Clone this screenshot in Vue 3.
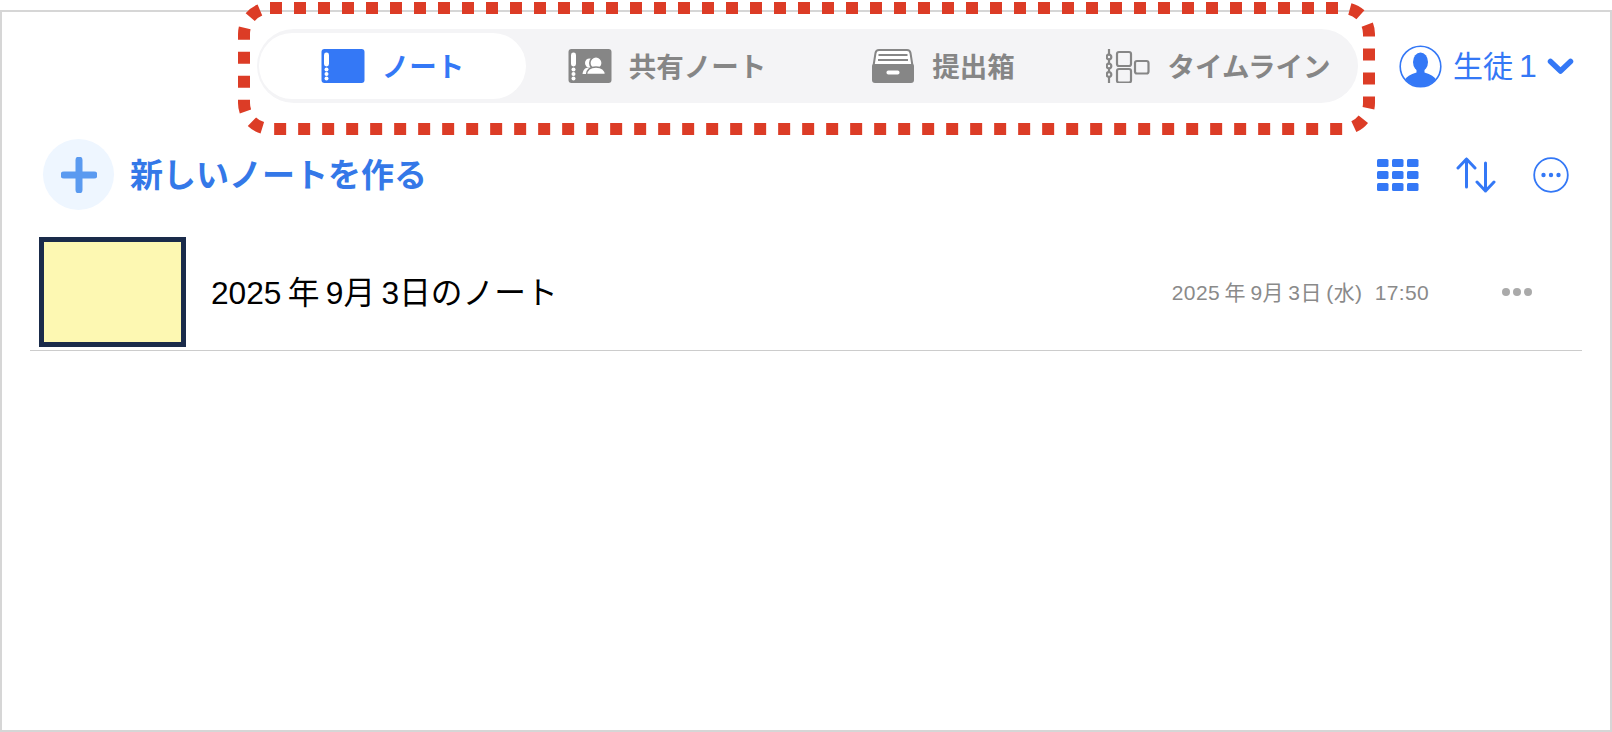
<script setup>
const tabs = [
  { label: 'ノート', icon: 'note', active: true },
  { label: '共有ノート', icon: 'shared' },
  { label: '提出箱', icon: 'box' },
  { label: 'タイムライン', icon: 'timeline' }
]
</script>

<template>
  <div class="frame">
    <header class="header">
      <nav class="tabs">
        <div v-for="tab in tabs" :key="tab.label" class="tab" :class="{ active: tab.active }">
          <svg class="tab-icon" width="44" height="34" viewBox="0 0 44 34">
            <template v-if="tab.icon === 'note' || tab.icon === 'shared'">
              <rect x="0.5" width="43" height="34" rx="3" fill="currentColor" />
              <rect x="3" y="3.500" width="5" height="14" rx="2.400" fill="#fff" />
              <circle cx="5.500" cy="20.500" r="2" fill="#fff" />
              <circle cx="5.500" cy="25" r="2" fill="#fff" />
              <circle cx="5.500" cy="29.500" r="2" fill="#fff" />
            </template>
            <template v-if="tab.icon === 'shared'">
              <circle cx="21.500" cy="14" r="4.500" fill="#fff" />
              <path d="M14.500 25c.5-4.500 3-6.500 6.500-6.500h3v6.500z" fill="#fff" />
              <circle cx="28" cy="14" r="6.200" fill="#fff" stroke="currentColor" stroke-width="1.600" />
              <path d="M18.500 25.500c.5-5.500 4-7.500 9.500-7.500s9 2 9.500 7.500z" fill="#fff" stroke="currentColor" stroke-width="1.400" />
            </template>
            <template v-if="tab.icon === 'box'">
              <path d="M2.500 17 4.500 4Q5 1 8 1h28q3 0 3.500 3l2 13" fill="#fff" stroke="currentColor" stroke-width="2" />
              <path d="M7.500 6h29M7 11h30" stroke="currentColor" stroke-width="2" />
              <path d="M1 17q0-2 2-2h38q2 0 2 2v14q0 3-3 3H4q-3 0-3-3z" fill="currentColor" />
              <rect x="15.500" y="21.500" width="13" height="4" rx="1.800" fill="#fff" />
            </template>
            <template v-if="tab.icon === 'timeline'">
              <g fill="none" stroke="currentColor" stroke-width="2.200">
                <path d="M3 0v34" />
                <circle cx="3" cy="8" r="2.300" fill="#f4f4f6" />
                <circle cx="3" cy="17" r="2.300" fill="#f4f4f6" />
                <circle cx="3" cy="25.500" r="2.300" fill="#f4f4f6" />
                <rect x="11" y="3" width="14" height="14" rx="2" />
                <rect x="11" y="20" width="14" height="13.500" rx="2" />
                <rect x="29" y="12" width="13.500" height="12.500" rx="2" />
              </g>
            </template>
          </svg>
          <span>{{ tab.label }}</span>
        </div>
      </nav>
      <div class="user">
        <svg width="43" height="43" viewBox="0 0 43 43">
          <defs>
            <clipPath id="avatar"><circle cx="21.500" cy="21.500" r="20" /></clipPath>
          </defs>
          <circle cx="21.500" cy="21.500" r="20.300" fill="none" stroke="#3478f6" stroke-width="1.600" />
          <g clip-path="url(#avatar)" fill="#3478f6">
            <ellipse cx="21.500" cy="17" rx="7.500" ry="9.500" />
            <path d="M17.500 24v3.500Q8 30 6 35v8h31v-8q-2-5-11.500-7.500V24z" />
          </g>
        </svg>
        <span class="user-name">生徒&#8201;<b>1</b></span>
        <svg width="27" height="18" viewBox="0 0 27 18">
          <path d="M3.500 4.500 13.500 14 23.500 4.500" fill="none" stroke="#3478f6" stroke-width="5.500" stroke-linecap="round" stroke-linejoin="round" />
        </svg>
      </div>
    </header>

    <div class="toolbar">
      <div class="add">
        <span class="add-circle">
          <svg width="36" height="36" viewBox="0 0 36 36">
            <path d="M18 3v30M3 18h30" stroke="#5a9af0" stroke-width="7" stroke-linecap="round" />
          </svg>
        </span>
        <span class="add-label">新しいノートを作る</span>
      </div>
      <div class="tools">
        <svg width="42" height="32" viewBox="0 0 42 32" fill="#3478f6">
          <template v-for="y in [0, 12, 24]" :key="y">
            <rect v-for="x in [0, 15, 30]" :key="x" :x="x" :y="y" width="11.500" height="8" rx="1.500" />
          </template>
        </svg>
        <svg width="40" height="36" viewBox="0 0 40 36" fill="none" stroke="#3478f6" stroke-width="3" stroke-linecap="round" stroke-linejoin="round">
          <path d="M10.500 30V2M2 11l8.500-9L19 11" />
          <path d="M29.500 6v28M21 25l8.500 9L38 25" />
        </svg>
        <svg width="36" height="36" viewBox="0 0 36 36">
          <circle cx="18" cy="18" r="16.800" fill="none" stroke="#3478f6" stroke-width="1.800" />
          <circle cx="10.500" cy="18" r="2.200" fill="#3478f6" />
          <circle cx="18" cy="18" r="2.200" fill="#3478f6" />
          <circle cx="25.500" cy="18" r="2.200" fill="#3478f6" />
        </svg>
      </div>
    </div>

    <div class="note-row">
      <div class="thumb"></div>
      <div class="note-title">2025&#8201;年&#8201;9月&#8201;3日のノート</div>
      <div class="note-date">2025&#8201;年&#8201;9月&#8201;3日&#8201;(水) &nbsp;17:50</div>
      <div class="dots"><i></i><i></i><i></i></div>
    </div>

    <svg class="callout" width="1143" height="136" viewBox="0 0 1143 136">
      <rect x="6" y="6" width="1125" height="121" rx="26" fill="none" stroke="#dc3c26" stroke-width="12" stroke-dasharray="12 12" />
    </svg>
  </div>
</template>

<style scoped>
.frame {
  position: relative;
  box-sizing: border-box;
  height: 722px;
  margin-top: 10px;
  border: 2px solid #d6d6d6;
  background: #fff;
  font-family: "Liberation Sans", "Noto Sans CJK JP", sans-serif;
}

.header {
  display: flex;
  align-items: center;
  padding: 17px 0 0 255px;
}

.tabs {
  display: grid;
  grid-template-columns: 270px 280px 272px 279px;
  width: 1101px;
  height: 74px;
  border-radius: 37px;
  background: #f4f4f6;
}

.tab {
  display: flex;
  align-items: center;
  justify-content: center;
  gap: 17px;
  color: #868686;
  font-size: 27.500px;
  font-weight: 700;
}

.tab span {
  position: relative;
  top: -1px;
}

.tab.active {
  margin: 4px 1px 4px 2px;
  border-radius: 33px;
  background: #fff;
  color: #3478f6;
}

.tab-icon {
  flex: none;
}

.user {
  display: flex;
  align-items: center;
  margin-left: 41px;
  color: #3478f6;
}

.user-name {
  position: relative;
  top: -2px;
  margin: 0 10px 0 11px;
  font-size: 30px;
}

.user-name b {
  font-weight: 400;
  font-size: 32px;
}

.toolbar {
  display: flex;
  align-items: center;
  justify-content: space-between;
  margin-top: 36px;
  padding: 0 41px 0 41px;
  height: 71px;
}

.add {
  display: flex;
  align-items: center;
  gap: 16px;
}

.add-circle {
  display: flex;
  align-items: center;
  justify-content: center;
  width: 71px;
  height: 71px;
  border-radius: 50%;
  background: #eef6ff;
}

.add-label {
  position: relative;
  top: -2px;
  color: #3478e8;
  font-size: 33px;
  font-weight: 700;
}

.tools {
  display: flex;
  align-items: center;
  gap: 37px;
}

.note-row {
  display: flex;
  align-items: center;
  margin: 27px 28px 0;
  padding: 0 0 3px 9px;
  border-bottom: 1px solid #cccccc;
}

.thumb {
  box-sizing: border-box;
  flex: none;
  width: 147px;
  height: 110px;
  border: 5px solid #1a2b4a;
  background: #fdf8b2;
}

.note-title {
  flex: 1;
  margin: 0 0 4px 25px;
  color: #000;
  font-size: 31.700px;
}

.note-date {
  margin-bottom: 3px;
  color: #8a8a8a;
  font-size: 21px;
  letter-spacing: 0.350px;
}

.dots {
  display: flex;
  gap: 3px;
  margin: 0 50px 1px 73px;
}

.dots i {
  width: 8px;
  height: 8px;
  border-radius: 50%;
  background: #aaaaaa;
}

.callout {
  position: absolute;
  top: -10px;
  left: 236px;
}
</style>
